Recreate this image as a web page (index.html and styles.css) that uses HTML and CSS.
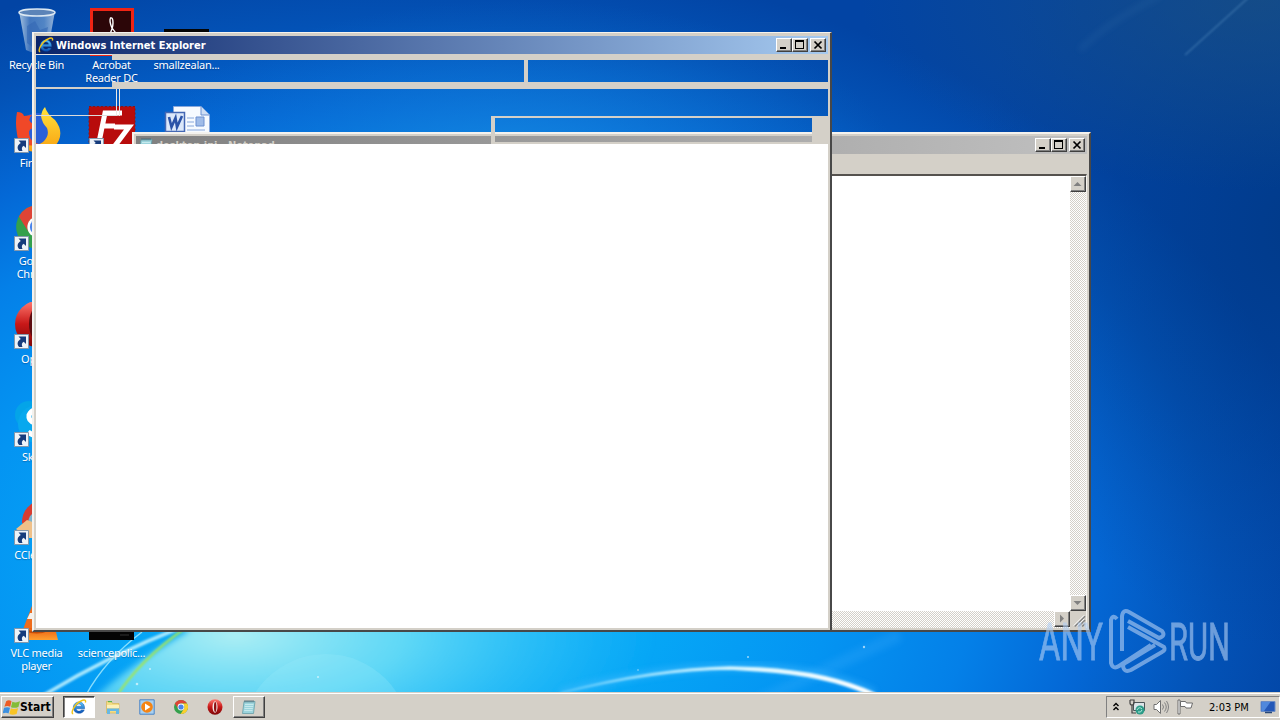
FILE: index.html
```html
<!DOCTYPE html>
<html lang="en">
<head>
    <meta charset="UTF-8">
    <meta name="viewport" content="width=device-width, initial-scale=1.0">
    <title>Desktop</title>
    <link rel="stylesheet" href="styles.css">
</head>
<body>
    <!-- Shared icons -->
    <svg class="defs" width="0" height="0">
        <defs>
            <linearGradient id="ieBlue" x1="0" y1="0" x2="0" y2="1">
                <stop offset="0" stop-color="#5cc8ff"/>
                <stop offset="1" stop-color="#0a50b4"/>
            </linearGradient>
            <linearGradient id="operaRed" x1="0" y1="0" x2="0" y2="1">
                <stop offset="0" stop-color="#ff7a70"/>
                <stop offset="0.5" stop-color="#c81818"/>
                <stop offset="1" stop-color="#7c0606"/>
            </linearGradient>
            <linearGradient id="binGlass" x1="0" y1="0" x2="1" y2="0">
                <stop offset="0" stop-color="#b8d0e6"/>
                <stop offset="0.3" stop-color="#4a7cc0"/>
                <stop offset="0.7" stop-color="#5a8cc8"/>
                <stop offset="1" stop-color="#a4bede"/>
            </linearGradient>
            <linearGradient id="vlcOrange" x1="0" y1="0" x2="0" y2="1">
                <stop offset="0" stop-color="#e85c10"/>
                <stop offset="1" stop-color="#ffa030"/>
            </linearGradient>
            <linearGradient id="foxTail" x1="0" y1="0" x2="0" y2="1">
                <stop offset="0" stop-color="#ffe23c"/>
                <stop offset="1" stop-color="#f8a010"/>
            </linearGradient>
            <symbol id="ie" viewBox="0 0 16 16">
                <path d="M13.600 9.800H5.200c.3 2.700 3.900 3 5 1.100h3.100c-1.900 5.200-11 4.500-11-2.300C2.300 1 14.300.7 13.600 9.800zM5.300 7.200h5.200C10.200 4.200 5.700 4.200 5.300 7.200z" fill="url(#ieBlue)" stroke="#0a4a9c" stroke-width=".4"/>
                <path d="M2.200 14.800C-1 14.500 3.500 5 10 2c3.400-1.700 5.300-1 4.300 1.600" fill="none" stroke="#f2c418" stroke-width="1.400"/>
            </symbol>
            <symbol id="chrome" viewBox="0 0 16 16">
                <circle cx="8" cy="8" r="7" fill="#34a04c"/>
                <path d="M1.900 4.600A7 7 0 0 1 14.100 4.600H8A3.500 3.500 0 0 0 5 9.700z" fill="#de4436"/>
                <path d="M14.100 4.600A7 7 0 0 1 7.600 15L11 9.800A3.500 3.500 0 0 0 8 4.600z" fill="#fbcf2c"/>
                <circle cx="8" cy="8" r="3.400" fill="#fff"/>
                <circle cx="8" cy="8" r="2.600" fill="#4a84ea"/>
            </symbol>
            <symbol id="opera" viewBox="0 0 16 16">
                <ellipse cx="8" cy="8" rx="7.500" ry="7.700" fill="url(#operaRed)"/>
                <ellipse cx="8" cy="8" rx="2.500" ry="5.700" fill="#f4e8e6"/>
                <ellipse cx="8.200" cy="8" rx="1.200" ry="5" fill="#8c1010"/>
            </symbol>
            <symbol id="operaBig" viewBox="0 0 48 48">
                <ellipse cx="25" cy="24" rx="24" ry="23.500" fill="url(#operaRed)"/>
                <ellipse cx="25" cy="24" rx="10" ry="18" fill="#5c0c10"/>
                <ellipse cx="27" cy="24" rx="8" ry="17" fill="#1c8cf0"/>
            </symbol>
            <symbol id="pad" viewBox="0 0 16 16">
                <path d="M3 2.500h11L12.500 14.500H1.500z" fill="#9cd4dc" stroke="#5c98a4" stroke-width=".7"/>
                <path d="M4 5.500h8.500M3.700 7.500h8.500M3.500 9.500h8.300M3.200 11.500h8.300" stroke="#d8f2f4" stroke-width=".7"/>
                <path d="M4 1v2.500M6 1v2.500M8 1v2.500M10 1v2.500M12 1v2.500" stroke="#46606c" stroke-width=".8"/>
            </symbol>
            <symbol id="shortcut" viewBox="0 0 15 15">
                <path d="M.5.5h14v14H.5z" fill="#eef3f8" stroke="#8498ac"/>
                <path d="M4.500 2.500H12V10L9.700 7.800C7.500 9 7.500 11 8.500 13H5.200C2.500 10 3.500 7 6.800 5z" fill="#163c7c"/>
            </symbol>
        </defs>
    </svg>

    <div class="desktop">
        <svg class="wallpaper" viewBox="0 0 1280 720">
            <defs>
                <radialGradient id="sky" gradientUnits="userSpaceOnUse" cx="0" cy="0" r="1" gradientTransform="translate(400 570) scale(930 620)">
                    <stop offset="0" stop-color="#20bcf8"/>
                    <stop offset="0.3" stop-color="#06a6f6"/>
                    <stop offset="0.47" stop-color="#0494f2"/>
                    <stop offset="0.62" stop-color="#0480e8"/>
                    <stop offset="0.74" stop-color="#0468d6"/>
                    <stop offset="0.88" stop-color="#0352b6"/>
                    <stop offset="1" stop-color="#0244a4"/>
                </radialGradient>
                <radialGradient id="beam" gradientUnits="userSpaceOnUse" cx="0" cy="0" r="1" gradientTransform="translate(520 170) scale(380 170)">
                    <stop offset="0" stop-color="#1c94e4" stop-opacity=".7"/>
                    <stop offset="1" stop-color="#1078d4" stop-opacity="0"/>
                </radialGradient>
                <radialGradient id="shade" gradientUnits="userSpaceOnUse" cx="0" cy="0" r="1" gradientTransform="translate(1300 230) scale(330 420)">
                    <stop offset="0" stop-color="#003478" stop-opacity=".6"/>
                    <stop offset="1" stop-color="#003c8c" stop-opacity="0"/>
                </radialGradient>
                <radialGradient id="haze" gradientUnits="userSpaceOnUse" cx="0" cy="0" r="1" gradientTransform="translate(1260 0) scale(400 190)">
                    <stop offset="0" stop-color="#1c5080" stop-opacity=".7"/>
                    <stop offset="1" stop-color="#1c5080" stop-opacity="0"/>
                </radialGradient>
                <radialGradient id="glow" gradientUnits="userSpaceOnUse" cx="0" cy="0" r="1" gradientTransform="translate(235 635) scale(420 170)">
                    <stop offset="0" stop-color="#b4f2f4" stop-opacity=".95"/>
                    <stop offset="0.4" stop-color="#78e4f6" stop-opacity=".75"/>
                    <stop offset="1" stop-color="#30c8f8" stop-opacity="0"/>
                </radialGradient>
                <linearGradient id="arc" gradientUnits="userSpaceOnUse" x1="560" y1="0" x2="880" y2="0">
                    <stop offset="0" stop-color="#7cd8ff" stop-opacity=".6"/>
                    <stop offset="0.55" stop-color="#d8f6ff"/>
                    <stop offset="1" stop-color="#fff"/>
                </linearGradient>
                <filter id="soft" x="-20%" y="-20%" width="140%" height="140%"><feGaussianBlur stdDeviation="3"/></filter>
                <filter id="softer" x="-20%" y="-20%" width="140%" height="140%"><feGaussianBlur stdDeviation=".8"/></filter>
            </defs>
            <rect width="1280" height="720" fill="url(#sky)"/>
            <rect width="1280" height="720" fill="url(#beam)"/>
            <rect width="1280" height="720" fill="url(#shade)"/>
            <rect width="1280" height="720" fill="url(#haze)"/>
            <path d="M80 480H700V720H70Q120 670 190 630L95 600Z" fill="url(#glow)" filter="url(#soft)"/>
            <circle cx="326" cy="738" r="84" fill="#9ceafc" opacity=".25"/>
            <path d="M760 700L900 635" stroke="#48b4ff" stroke-width="12" opacity=".2" filter="url(#soft)"/>
            <path d="M1080 50Q1110 20 1160 -4" stroke="#3c78b0" stroke-width="4" opacity=".25" fill="none" filter="url(#soft)"/>
            <path d="M1185 55L1248 -2" stroke="#5c94c4" stroke-width="1.500" opacity=".5" fill="none" filter="url(#softer)"/>
            <path d="M44 695Q110 655 182 627" stroke="#c8f6ff" stroke-width="3.500" opacity=".85" fill="none" filter="url(#softer)"/>
            <path d="M86 695Q105 660 142 632" stroke="#a8ecff" stroke-width="1.500" opacity=".8" fill="none"/>
            <path d="M116 697Q140 660 184 629" stroke="#a0e65c" stroke-width="2.200" fill="none" filter="url(#softer)"/>
            <path d="M560 693Q650 668 730 667Q820 666 874 693" stroke="#48bcff" stroke-width="7" opacity=".5" fill="none" filter="url(#soft)"/>
            <path d="M560 693Q655 668 730 667L760 668Q830 672 876 694L868 694Q825 675 760 671L730 669Q655 670 560 693Z" fill="url(#arc)" stroke="url(#arc)" stroke-width="1.500" filter="url(#softer)"/>
            <g fill="#fff" opacity=".6">
                <circle cx="137" cy="684" r="1.300"/><circle cx="150" cy="669" r="1"/><circle cx="318" cy="677" r="1"/>
                <circle cx="748" cy="657" r="1"/><circle cx="864" cy="647" r="1.200"/><circle cx="638" cy="670" r=".8"/>
            </g>
        </svg>

        <div class="icons">
            <div class="icon-column">
                <div class="icon">
                    <svg viewBox="0 0 48 48">
                        <path d="M6 3L13 42Q24 48 35 42L42 3z" fill="url(#binGlass)" opacity=".9"/>
                        <path d="M14 18l8-5 5 9 8-3-3 17-10 5-8-6z" fill="#3468b4" opacity=".6"/>
                        <ellipse cx="24" cy="4.500" rx="18" ry="3.500" fill="#5c84b8" stroke="#dce8f2" stroke-width="1.500"/>
                    </svg>
                    <span>Recycle Bin</span>
                </div>
                <div class="icon">
                    <svg viewBox="0 0 48 48">
                        <circle cx="24" cy="26" r="19" fill="#2a60d8"/>
                        <path d="M4 6Q10 6 11 10L19 9Q13 14 20 18L22 22Q15 22 16 28Q17 36 26 38L25 46Q5 42 4 28Q2 16 4 6z" fill="#f04828"/>
                        <path d="M32 1Q34 8 42 14Q50 24 46 34Q40 47 22 46Q12 45 9 38Q22 42 30 36Q37 30 34 22Q29 17 28 10Q29 4 32 1z" fill="url(#foxTail)"/>
                    </svg>
                    <svg class="arrow"><use href="#shortcut"/></svg>
                    <span>Firefox</span>
                </div>
                <div class="icon">
                    <svg viewBox="0 0 48 48"><use href="#chrome" x="0" y="-2" width="50" height="50"/></svg>
                    <svg class="arrow"><use href="#shortcut"/></svg>
                    <span>Google Chrome</span>
                </div>
                <div class="icon">
                    <svg viewBox="0 0 48 48"><use href="#operaBig" x="1" y="-2" width="48" height="48"/></svg>
                    <svg class="arrow"><use href="#shortcut"/></svg>
                    <span>Opera</span>
                </div>
                <div class="icon">
                    <svg viewBox="0 0 48 48">
                        <circle cx="16" cy="15" r="14" fill="#04a4e8"/>
                        <circle cx="24" cy="24" r="19" fill="#08a8ee"/>
                        <path d="M33 12Q20 6 16 15Q15 21 22 23L30 26M15 32Q22 38 33 33" fill="none" stroke="#fff" stroke-width="5"/>
                    </svg>
                    <svg class="arrow"><use href="#shortcut"/></svg>
                    <span>Skype</span>
                </div>
                <div class="icon">
                    <svg viewBox="0 0 48 48">
                        <path d="M30 2A22 22 0 0 0 9 25L18 32L44 24z" fill="#d83c30"/>
                        <path d="M28 14Q16 13 15 25L24 30z" fill="#7cb4d0"/>
                        <path d="M3 31L14 22L30 28L34 40L16 40z" fill="#f0c088"/>
                    </svg>
                    <svg class="arrow"><use href="#shortcut"/></svg>
                    <span>CCleaner</span>
                </div>
                <div class="icon">
                    <svg viewBox="0 0 48 48">
                        <path d="M22 2h5L40 36H9z" fill="#ee6c1c"/>
                        <path d="M17 17h14l3 6H14z" fill="#f4f0ec"/>
                        <path d="M4 32h38l3 12H1z" fill="url(#vlcOrange)"/>
                        <path d="M12 34q12 5 23 0" fill="none" stroke="#c44c08" stroke-width="2"/>
                    </svg>
                    <svg class="arrow"><use href="#shortcut"/></svg>
                    <span>VLC media player</span>
                </div>
            </div>
            <div class="icon-column">
                <div class="icon">
                    <svg viewBox="0 0 48 48">
                        <path d="M3.500 1.500h41v46h-41z" fill="#2c0608" stroke="#f02414" stroke-width="3"/>
                        <path d="M21 28Q25 20 25 15Q25 9 22.500 10Q21 13 24 20Q27 25 31 27" fill="none" stroke="#fff" stroke-width="1.400"/>
                    </svg>
                    <span>Acrobat Reader DC</span>
                </div>
                <div class="icon">
                    <svg viewBox="0 0 48 48">
                        <path d="M1 .5h46v46H1z" fill="#b80c0c" stroke="#8c1414" stroke-dasharray="2 2"/>
                        <path d="M10 41L17 7H34M14 20H27M26 21H41L26 41H40" fill="none" stroke="#fff" stroke-width="5"/>
                    </svg>
                    <svg class="arrow"><use href="#shortcut"/></svg>
                </div>
                <div class="icon last">
                    <svg viewBox="0 0 48 48"><path d="M1 22h45v22H1z" fill="#040404"/><path d="M32 39h9" stroke="#333"/></svg>
                    <span>sciencepolic...</span>
                </div>
            </div>
            <div class="icon-column">
                <div class="icon">
                    <svg viewBox="0 0 48 48"><path d="M1 21h45v24H1z" fill="#040404"/></svg>
                    <span>smallzealan...</span>
                </div>
                <div class="icon">
                    <svg viewBox="0 0 48 48">
                        <path d="M10.500.5H38L46.500 9V46H10.500z" fill="#f6faff" stroke="#88a8dc"/>
                        <path d="M38 .5V9h8.500" fill="#cfdef4" stroke="#6c90d0"/>
                        <path d="M24 12h7M24 16h7M24 20h7M24 24h18" stroke="#88a8dc"/>
                        <path d="M33 11h8v9h-8z" fill="#a0bce8" stroke="#6c90d0"/>
                        <path d="M2.500 6.500h19v19h-19z" fill="#dce8fa" stroke="#4468b4" stroke-width="1.500"/>
                        <path d="M6 11L8.500 21L12.500 12L14 21L19 10" fill="none" stroke="#2c54a8" stroke-width="2.600"/>
                    </svg>
                </div>
            </div>
        </div>

        <!-- Notepad -->
        <div class="window notepad">
            <div class="titlebar inactive">
                <svg class="title-icon"><use href="#pad"/></svg>
                <span class="title">desktop.ini - Notepad</span>
                <div class="controls">
                    <button class="control"><svg viewBox="0 0 12 10"><path d="M2 7h6v2H2z"/></svg></button>
                    <button class="control"><svg viewBox="0 0 12 10"><path d="M1 0h9v9H1zM2 2v6h7V2z" fill-rule="evenodd"/></svg></button>
                    <button class="control close"><svg viewBox="0 0 12 10"><path d="M2.500 1.500l7 7M9.500 1.500l-7 7" stroke="#000" stroke-width="1.700"/></svg></button>
                </div>
            </div>
            <div class="menubar"></div>
            <div class="editor">
                <div class="editor-main">
                    <div class="page"></div>
                    <div class="scroll vertical">
                        <div class="scroll-button"><svg viewBox="0 0 16 16"><path d="M3.500 10h8L7.500 6z"/></svg></div>
                        <div class="scroll-button"><svg viewBox="0 0 16 16"><path d="M3.500 6h8l-4 4z"/></svg></div>
                    </div>
                </div>
                <div class="editor-bottom">
                    <div class="scroll horizontal">
                        <div class="scroll-button"><svg viewBox="0 0 16 16"><path d="M6 3.500v8l4-4z"/></svg></div>
                    </div>
                    <svg class="grip" viewBox="0 0 17 17"><path d="M5 16L16 5M9 16L16 9M13 16L16 13" stroke="#808080" stroke-width="1.500"/><path d="M4 15L15 4M8 15L15 8" stroke="#fff"/></svg>
                </div>
            </div>
        </div>

        <!-- Internet Explorer, toolbars not painted yet -->
        <div class="window explorer">
            <div class="titlebar">
                <svg class="title-icon"><use href="#ie"/></svg>
                <span class="title">Windows Internet Explorer</span>
                <div class="controls">
                    <button class="control"><svg viewBox="0 0 12 10"><path d="M2 7h6v2H2z"/></svg></button>
                    <button class="control"><svg viewBox="0 0 12 10"><path d="M1 0h9v9H1zM2 2v6h7V2z" fill-rule="evenodd"/></svg></button>
                    <button class="control close"><svg viewBox="0 0 12 10"><path d="M2.500 1.500l7 7M9.500 1.500l-7 7" stroke="#000" stroke-width="1.700"/></svg></button>
                </div>
            </div>
            <div class="nav-row">
                <div class="nav-buttons"></div>
                <div class="address-row">
                    <div class="address"></div>
                    <div class="search"></div>
                </div>
            </div>
            <div class="tab-row"><div class="favorites"></div></div>
            <div class="command-row"><div class="commands"></div></div>
            <div class="content"></div>
        </div>

        <!-- Watermark -->
        <svg class="watermark" viewBox="0 0 200 70">
            <text x="4" y="53" textLength="64" lengthAdjust="spacingAndGlyphs">ANY</text>
            <path d="M82 12q-4-5-6 1v43q2 7 8 3l32-21M87 44V9q1-7 7-4l33 19q4 5-3 7L93 14M93 20l36 20q2 3-2 5L96 63q-7 3-8-4q0-2 4-4l28-17"/>
            <text x="134" y="53" textLength="61" lengthAdjust="spacingAndGlyphs">RUN</text>
        </svg>

        <div class="taskbar">
            <button class="start">
                <svg viewBox="0 0 16 16">
                    <path d="M3 2Q5.500.5 8 2L6.800 7.300Q4 6 1.300 7.300z" fill="#ee5c24"/>
                    <path d="M8.800 2.500Q12 4 16 2.200L14.500 7.500Q11 9 7.500 7.800z" fill="#84bc38"/>
                    <path d="M1 8.300Q4 7 6.600 8.300L5.200 13.600Q3 12.300-.4 13.600z" fill="#3c90e0"/>
                    <path d="M7.400 8.800Q10 10 14.200 8.600L12.800 14Q9 15.500 6 14z" fill="#f8c424"/>
                </svg>
                Start
            </button>
            <div class="tasks">
                <div class="task active"><svg><use href="#ie"/></svg></div>
                <div class="task">
                    <svg viewBox="0 0 16 16">
                        <path d="M1.500 2.500h5l1 2H14V14H1.500z" fill="#f4dc84" stroke="#d4b04c" stroke-width=".6"/>
                        <path d="M3 2h4v1.200H3z" fill="#58b44c"/>
                        <path d="M2 9.500h12V15h-3v-3H5v3H2z" fill="#68b8e4"/>
                        <path d="M2 6h12v3H2z" fill="#fcf0b8"/>
                    </svg>
                </div>
                <div class="task">
                    <svg viewBox="0 0 16 16">
                        <path d="M.8.8h14.400v14.400H.8z" fill="#a8d0f0" stroke="#4884c8"/>
                        <circle cx="8" cy="8" r="5.800" fill="#f48414"/>
                        <path d="M6 4.500v7l5.500-3.500z" fill="#fff"/>
                    </svg>
                </div>
                <div class="task"><svg><use href="#chrome"/></svg></div>
                <div class="task"><svg><use href="#opera"/></svg></div>
                <div class="task open"><svg><use href="#pad"/></svg></div>
            </div>
            <div class="tray">
                <svg class="chevrons" viewBox="0 0 8 10"><path d="M1.500 4L4 1.500L6.500 4M1.500 8L4 5.500L6.500 8" fill="none" stroke="#000" stroke-width="1.400"/></svg>
                <svg class="network" viewBox="0 0 16 16">
                    <path d="M4.500 3.500h11v8h-11z" fill="#dce4e8" stroke="#4c5458"/>
                    <path d="M1 1v3q0 2 2 2v8h4M1 1h4v3q0 2-2 2" fill="none" stroke="#444" stroke-width="1.200"/>
                    <circle cx="11" cy="11" r="4.500" fill="#2c9c88"/>
                    <path d="M8 11q2-4 5-1M9 13q3 1 4-2" fill="none" stroke="#b4e8dc"/>
                </svg>
                <svg class="speaker" viewBox="0 0 16 16">
                    <path d="M1 5.500h2.500L7.500 1.500v13L3.500 10.500H1z" fill="#fff" stroke="#707070"/>
                    <path d="M9.500 5.500q2 2.500 0 5M11.500 3.500q3.500 4.500 0 9M13.500 2q4 6 0 12" fill="none" stroke="#808080"/>
                </svg>
                <svg class="flag" viewBox="0 0 16 16">
                    <path d="M1 1h2v14H1z" fill="#fff" stroke="#505050" stroke-width=".8"/>
                    <path d="M3.500 2.500h5l1 1.500h6l-1.500 5H9l-1-1.500H3.500z" fill="#fff" stroke="#606060" stroke-width=".9"/>
                </svg>
                <span class="clock">2:03 PM</span>
                <svg class="monitor" viewBox="0 0 16 16">
                    <path d="M1 2.500h14v10H1z" fill="#2458b8" stroke="#6c8cc4"/>
                    <path d="M1.500 3h9L4 12H1.500z" fill="#5088dc"/>
                    <path d="M5 13.500h7" stroke="#284878" stroke-width="1.500"/>
                </svg>
            </div>
        </div>
    </div>
</body>
</html>
```
FILE: styles.css
```css
:root {
    --face: #d4d0c8;
    --shadow: #808080;
    --dark: #404040;
    --light: #ffffff;
}

* {
    margin: 0;
    padding: 0;
    box-sizing: border-box;
}

body {
    font-family: 'DejaVu Sans Condensed', 'DejaVu Sans', sans-serif;
    font-size: 11px;
    overflow: hidden;
}

.defs {
    position: absolute;
}

.desktop {
    position: relative;
    width: 1280px;
    height: 720px;
    overflow: hidden;
    background-color: #0468d6;
}

.wallpaper {
    position: absolute;
    inset: 0;
    width: 1280px;
    height: 720px;
}

/* Desktop icons */
.icons {
    position: absolute;
    left: -1px;
    top: 0;
    display: flex;
    height: 686px;
}

.icon-column {
    display: flex;
    flex-direction: column;
    width: 75px;
}

.icon {
    position: relative;
    display: flex;
    flex-direction: column;
    align-items: center;
    height: 98px;
    padding-top: 8px;
    color: #fff;
    font-family: 'Noto Sans', sans-serif;
    letter-spacing: -0.25px;
    line-height: 13px;
    text-align: center;
    text-shadow: 0 1px 1px rgba(0, 20, 70, 0.3);
}

.icon > svg {
    width: 48px;
    height: 48px;
    margin-bottom: 2px;
    flex-shrink: 0;
}

.icon span {
    max-width: 70px;
}

.icon .arrow {
    position: absolute;
    left: 15px;
    top: 40px;
    width: 15px;
    height: 15px;
}

.icon.last {
    margin-top: auto;
}

/* Windows */
.window {
    position: absolute;
    display: flex;
    flex-direction: column;
    border: 2px solid;
    border-color: #f4f2ee #484848 #484848 #f4f2ee;
}

.explorer {
    left: 32px;
    top: 32px;
    width: 800px;
    height: 600px;
    border-width: 1px 2px 2px 2px;
    box-shadow: inset 2px 0 var(--face), inset -2px 0 var(--face), inset 0 3px var(--face), inset 0 -2px var(--face);
    padding: 3px 2px 2px;
}

.notepad {
    left: 132px;
    top: 132px;
    width: 959px;
    height: 500px;
    background-color: var(--face);
    padding: 2px;
}

.titlebar {
    display: flex;
    align-items: center;
    height: 18px;
    flex-shrink: 0;
    padding: 0 2px;
    background: linear-gradient(to right, #0a246a, #a6caf0);
    color: #fff;
}

.titlebar.inactive {
    background: linear-gradient(to right, #808080, #c0c0c0);
    color: var(--face);
}

.title-icon {
    width: 16px;
    height: 16px;
    margin-right: 2px;
}

.title {
    font-family: 'DejaVu Sans Condensed', 'DejaVu Sans', sans-serif;
    font-weight: bold;
    white-space: nowrap;
}

.titlebar.inactive .title {
    letter-spacing: -0.1px;
}

.controls {
    display: flex;
    margin-left: auto;
}

.control,
.scroll-button {
    display: flex;
    align-items: center;
    justify-content: center;
    width: 16px;
    height: 14px;
    border: 1px solid;
    border-color: var(--light) var(--dark) var(--dark) var(--light);
    background-color: var(--face);
    box-shadow: inset -1px -1px var(--shadow);
}

.control svg {
    width: 12px;
    height: 10px;
}

.control.close {
    margin-left: 2px;
}

.menubar {
    height: 20px;
    flex-shrink: 0;
}

.editor {
    display: flex;
    flex: 1;
    flex-direction: column;
    border-top: 2px solid #55524e;
    border-left: 2px solid #55524e;
    border-right: 1px solid #f4f2ee;
}

.editor-main {
    display: flex;
    flex: 1;
}

.page {
    flex: 1;
    background-color: #fff;
}

.scroll {
    display: flex;
    justify-content: space-between;
    background: repeating-conic-gradient(#fff 0 25%, var(--face) 0 50%) 0 0 / 2px 2px;
}

.scroll.vertical {
    flex-direction: column;
    width: 16px;
}

.scroll.horizontal {
    flex: 1;
    justify-content: flex-end;
}

.scroll-button {
    height: 16px;
}

.scroll-button svg {
    width: 16px;
    height: 16px;
    flex-shrink: 0;
    fill: var(--shadow);
}

.editor-bottom {
    display: flex;
    height: 17px;
}

.grip {
    width: 16px;
    height: 17px;
}

/* Unpainted toolbars */
.nav-row {
    display: flex;
    height: 35px;
}

.nav-buttons {
    width: 76px;
    border-top: 1px solid #e4e4e4;
    border-bottom: 2px solid var(--face);
}

.address-row {
    display: flex;
    flex: 1;
    border-top: 6px solid var(--face);
    border-bottom: 7px solid var(--face);
}

.address {
    width: 416px;
    border-right: 4px solid var(--face);
}

.tab-row {
    height: 27px;
}

.favorites {
    width: 84px;
    height: 27px;
    border-right: 4px double #ece8e2;
    border-bottom: 1px solid #dcdcdc;
}

.command-row {
    display: flex;
    justify-content: flex-end;
    height: 28px;
}

.commands {
    width: 337px;
    border: 2px solid var(--face);
    border-left-width: 4px;
    border-right-width: 16px;
}

.content {
    flex: 1;
    background-color: #fff;
}

/* Watermark */
.watermark {
    position: absolute;
    left: 1035px;
    top: 607px;
    width: 200px;
    height: 70px;
    opacity: 0.6;
    overflow: visible;
}

.watermark text {
    font-family: Roboto, sans-serif;
    font-size: 52px;
    fill: #b4d0f4;
    stroke: #b4d0f4;
    stroke-width: 0.8;
}

.watermark path {
    fill: none;
    stroke: #b4d0f4;
    stroke-width: 4;
}

/* Taskbar */
.taskbar {
    position: absolute;
    left: 0;
    bottom: 0;
    display: flex;
    align-items: center;
    width: 1280px;
    height: 28px;
    padding: 1px 0 0 1px;
    border-top: 1px solid var(--face);
    background-color: var(--face);
    box-shadow: inset 0 1px #fff;
}

.start {
    display: flex;
    align-items: center;
    width: 53px;
    height: 22px;
    padding-left: 1px;
    border: 1px solid;
    border-color: #fff var(--dark) var(--dark) #fff;
    background-color: var(--face);
    box-shadow: inset -1px -1px var(--shadow);
    font-family: 'DejaVu Sans Condensed', sans-serif;
    font-size: 12px;
    font-weight: bold;
}

.start svg {
    width: 17px;
    height: 17px;
}

.tasks {
    display: flex;
    gap: 2px;
    margin-left: 9px;
}

.task {
    display: flex;
    align-items: center;
    justify-content: center;
    width: 32px;
    height: 22px;
    border: 1px solid transparent;
}

.task svg {
    width: 16px;
    height: 16px;
}

.task.active {
    border-color: var(--dark) #fff #fff var(--dark);
    background-color: #fff;
    box-shadow: inset 1px 1px var(--shadow);
}

.task.open {
    border-color: #fff var(--dark) var(--dark) #fff;
    box-shadow: inset -1px -1px var(--shadow);
}

.tray {
    display: flex;
    align-items: center;
    width: 174px;
    height: 22px;
    margin-left: auto;
    padding-left: 5px;
    border: 1px solid;
    border-color: var(--shadow) #fff #fff var(--shadow);
}

.tray svg {
    width: 16px;
    height: 16px;
    flex-shrink: 0;
}

.tray .chevrons {
    width: 8px;
    height: 10px;
    margin-right: 9px;
}

.tray .speaker,
.tray .flag {
    margin-left: 8px;
}

.clock {
    width: 42px;
    margin-left: 16px;
    margin-right: 9px;
    white-space: nowrap;
}
```
